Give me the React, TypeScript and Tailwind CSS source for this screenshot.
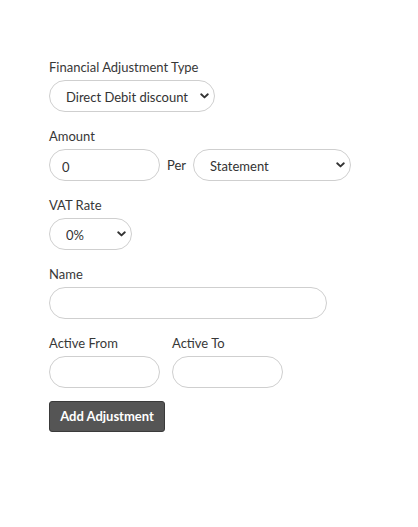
import { useState } from "react";

function Chevron() {
  return (
    <svg width="9" height="6" viewBox="0 0 9 6" className="pointer-events-none absolute right-[6px] top-1/2 -translate-y-1/2">
      <path d="M1.2 1.3 L4.5 4.4 L7.8 1.3" fill="none" stroke="#333" strokeWidth="1.9" strokeLinecap="round" strokeLinejoin="round" />
    </svg>
  );
}

function Select({ value, options, width }: { value: string; options: string[]; width: string }) {
  const [v, setV] = useState(value);
  return (
    <div className={`relative ${width}`}>
      <select
        value={v}
        onChange={(e) => setV(e.target.value)}
        className="h-8 w-full appearance-none rounded-full border border-[#cfcfcf] bg-white pl-4 pr-6 pt-[3px] text-[13px] text-[#333] outline-none"
      >
        {options.map((o) => (
          <option key={o}>{o}</option>
        ))}
      </select>
      <Chevron />
    </div>
  );
}

function Input({ width, value }: { width: string; value?: string }) {
  return (
    <input
      defaultValue={value}
      className={`h-8 ${width} rounded-full border border-[#cfcfcf] bg-white px-3 pt-[3px] text-[13px] text-[#333] outline-none`}
    />
  );
}

function Label({ children }: { children: React.ReactNode }) {
  return <label className="block text-[13px] leading-5 text-[#383838]">{children}</label>;
}

export default function App() {
  return (
    <div className="min-h-[527px] bg-white pl-[49px] pt-[57px]" style={{ fontFamily: "Lato, 'Liberation Sans', sans-serif" }}>
      <div className="flex flex-col gap-[14px]">
        <div>
          <Label>Financial Adjustment Type</Label>
          <div className="mt-[3px]">
            <Select width="w-[166px]" value="Direct Debit discount" options={["Direct Debit discount", "Late payment fee", "Other"]} />
          </div>
        </div>
        <div>
          <Label>Amount</Label>
          <div className="mt-[3px] flex items-center">
            <Input width="w-[111px]" value="0" />
            <span className="ml-[7px] mr-[7px] pt-[2px] text-[13px] text-[#333]">Per</span>
            <Select width="w-[158px]" value="Statement" options={["Statement", "Month", "Year"]} />
          </div>
        </div>
        <div>
          <Label>VAT Rate</Label>
          <div className="mt-[3px]">
            <Select width="w-[83px]" value="0%" options={["0%", "5%", "20%"]} />
          </div>
        </div>
        <div>
          <Label>Name</Label>
          <div className="mt-[3px]">
            <Input width="w-[278px]" />
          </div>
        </div>
        <div className="flex gap-3">
          <div>
            <Label>Active From</Label>
            <div className="mt-[3px]">
              <Input width="w-[111px]" />
            </div>
          </div>
          <div>
            <Label>Active To</Label>
            <div className="mt-[3px]">
              <Input width="w-[111px]" />
            </div>
          </div>
        </div>
        <div className="-mt-px">
          <button className="h-[31px] w-[116px] rounded-[3px] border border-[#3a3a3a] bg-[#555] text-[13px] font-bold text-white">
            Add Adjustment
          </button>
        </div>
      </div>
    </div>
  );
}
